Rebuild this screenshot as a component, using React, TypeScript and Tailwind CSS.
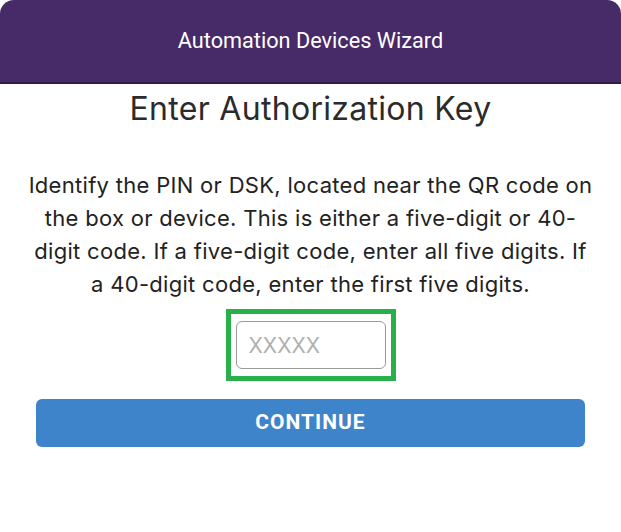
export default function App() {
  return (
    <div className="w-[621px] h-[532px] bg-white overflow-hidden">
      <header className="h-[84px] bg-[#472a68] rounded-t-[14px] border-b-2 border-[#2f1a47] flex items-center justify-center">
        <h1 className="font-['Roboto',sans-serif] text-white text-[21.7px] leading-none">
          Automation Devices Wizard
        </h1>
      </header>
      <div className="flex flex-col items-center font-['Inter',sans-serif]">
        <h2 className="mt-[5px] text-[32px] leading-[40px] tracking-[0.3px] text-[#2b2b2b]">Enter Authorization Key</h2>
        <p className="mt-[40px] px-[27px] text-center text-[22px] leading-[33px] tracking-[0.3px] text-[#222]">
          Identify the PIN or DSK, located near the QR code on the box or device. This is either a five-digit or 40-digit code. If a five-digit code, enter all five digits. If a 40-digit code, enter the first five digits.
        </p>
        <div className="mt-[8px] w-[170px] h-[72px] border-[5px] border-[#2ab04b] flex items-center justify-center">
          <input
            placeholder="XXXXX"
            className="w-[150px] h-[48px] rounded-[6px] border border-[#9a9a9a] px-[12px] text-[21px] font-['Inter',sans-serif] placeholder:text-[#b0b0b0] outline-none"
          />
        </div>
        <button className="mt-[18px] w-[549px] h-[48px] rounded-[6px] bg-[#3e84cb] text-white font-['Roboto',sans-serif] font-bold text-[21px] tracking-[1px]">
          CONTINUE
        </button>
      </div>
    </div>
  );
}
